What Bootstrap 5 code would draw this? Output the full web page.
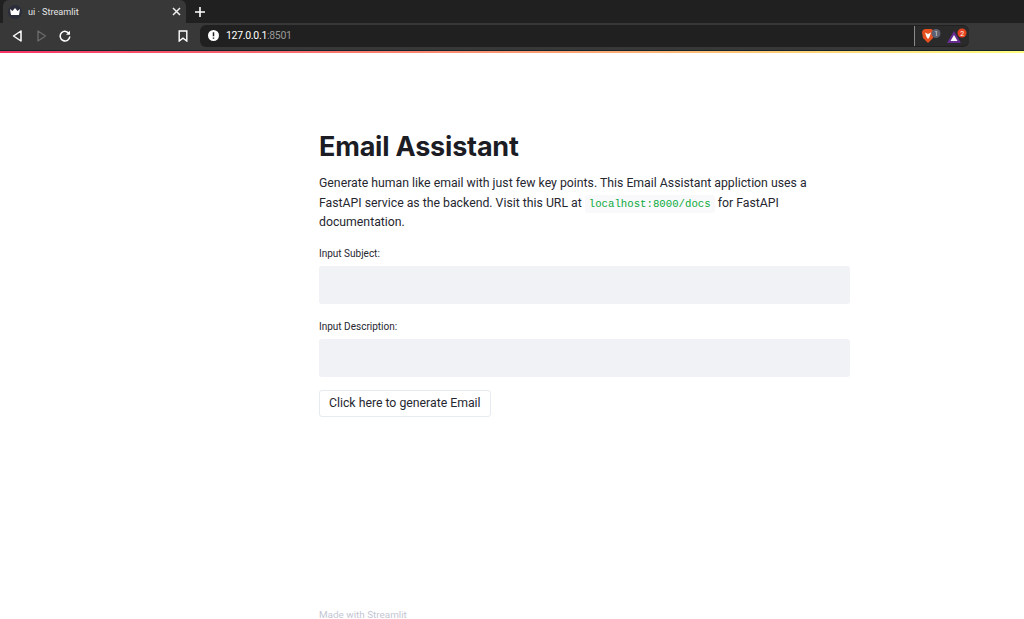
<!DOCTYPE html>
<html lang="en"><head><meta charset="utf-8"><title>ui · Streamlit</title>
<link href="https://cdn.jsdelivr.net/npm/bootstrap@5.3.0/dist/css/bootstrap.min.css" rel="stylesheet">
<style>
html,body{height:100%;overflow:hidden}
body{font-family:"Roboto","Liberation Sans",sans-serif;background:#fff;color:#262730}
.shell{height:619px;width:1024px}
.tabstrip{height:23px;background:#202020}
.apptab{width:183px;height:23px;background:#383838;border-radius:6px 6px 0 0;margin-left:3px;padding:0 5px 0 5px;font:9.1px "Roboto",sans-serif;color:#e6e6e6;gap:6px}
.favicon{width:14px;height:14px;border-radius:50%;background:#2b2d3b}
.plusicon{margin-left:9px}
.toolbar{height:28px;background:#383838;padding:0 0 2px 12px;border-bottom:1px solid #14262a}
.navback{margin-right:15px}
.navfwd{margin-right:12px}
.navmark{margin-left:107px}
.urlbox{width:769px;height:22px;margin-left:12px;background:#202020;border-radius:6px;font:10.5px "Roboto",sans-serif;letter-spacing:-.3px;color:#fff;padding-left:8px}
.urltext{margin-left:7px}
.urlport{color:#9a9a9a}
.extbox{height:20px;width:55px;margin-left:auto;padding-left:6px;background:#2a2a2a;border-radius:0 6px 6px 0;border-left:1px solid #8a8a8a;background-clip:padding-box}
.gradline{height:2px;background:linear-gradient(90deg,#f63366,#fffd80)}
.appmain{width:531px;margin-left:319px;padding-top:75px}
.apptitle{font:700 27px/37px "Inter","Noto Sans",sans-serif;color:#1b1c24;margin:0 0 9px;letter-spacing:-.2px}
.intro{font-size:12.27px;line-height:19.5px;color:#262730;margin:0 0 14.5px}
.intro code{font:10.7px "Liberation Mono","DejaVu Sans Mono",monospace;color:#09ab3b;background:#f9f9fb;padding:3px 4px;border-radius:3px}
.flabel{font-size:10px;line-height:14px;margin-bottom:5px;color:#262730}
.fbox{height:38px;background:#f0f2f6;border:0;border-radius:3px;margin-bottom:16px;width:100%;display:block}
.genbtn{font-size:12.27px;line-height:18px;padding:3px 9px;height:27px;color:#262730;background:#fff;border:1px solid #e6eaf1;border-radius:3px;margin-top:-5px}
.madewith{font-size:9.9px;line-height:12px;font-weight:400;color:#c4c6d3;margin-left:319px;margin-top:auto;margin-bottom:-2px}
</style></head>
<body>
<div class="shell d-flex flex-column">
 <div class="tabstrip d-flex">
  <div class="apptab d-flex align-items-center">
   <span class="favicon d-flex align-items-center justify-content-center"><svg width="10" height="8" viewBox="0 0 10 8"><path d="M0 1l2.500 2L5 0l2.500 3L10 1 9 7H1z" fill="#fff"/></svg></span>
   <span class="flex-grow-1">ui · Streamlit</span>
   <svg width="9" height="9" viewBox="0 0 9 9"><path d="M1 1l7 7M8 1L1 8" stroke="#eee" stroke-width="1.500"/></svg>
  </div>
  <svg class="plusicon align-self-center" width="10" height="10" viewBox="0 0 10 10"><path d="M5 0v10M0 5h10" stroke="#fff" stroke-width="1.600"/></svg>
 </div>
 <div class="toolbar d-flex align-items-center">
  <svg class="navback" width="10" height="12" viewBox="0 0 10 12"><path d="M9 1v10L1.500 6z" fill="none" stroke="#fff" stroke-width="1.500" stroke-linejoin="round"/></svg>
  <svg class="navfwd" width="10" height="12" viewBox="0 0 10 12"><path d="M1 1v10l7.500-5z" fill="none" stroke="#6a6a6a" stroke-width="1.400" stroke-linejoin="round"/></svg>
  <svg width="12" height="12" viewBox="0 0 12 12"><path d="M10.300 4A4.800 4.800 0 1 0 10.800 6.500" fill="none" stroke="#fff" stroke-width="1.500"/><path d="M11 .8v4H7z" fill="#fff"/></svg>
  <svg class="navmark" width="10" height="12" viewBox="0 0 10 12"><path d="M1.200 1h7.600v10L5 8.200 1.200 11z" fill="none" stroke="#fff" stroke-width="1.400"/></svg>
  <div class="urlbox d-flex align-items-center">
   <svg width="11" height="11" viewBox="0 0 11 11"><circle cx="5.500" cy="5.500" r="5.500" fill="#fff"/><path d="M5.500 2.200v4M5.500 7.400v1.400" stroke="#202020" stroke-width="1.500"/></svg>
   <span class="urltext"><span>127.0.0.1</span><span class="urlport">:8501</span></span>
   <div class="extbox d-flex align-items-center gap-1">
    <svg width="22" height="16" viewBox="0 0 22 16"><path d="M2 2l2-1h6l2 1 1 2-1 6-5 5-5-5-1-6z" fill="#e8501f"/><path d="M4 4.500L7 6l3-1.500L8.500 9 7 11 5.500 9z" fill="#fff"/><circle cx="15" cy="5.500" r="4.500" fill="#5d6070"/><text x="15" y="8" font-size="7" fill="#ddd" text-anchor="middle" font-family="Roboto">1</text></svg>
    <svg width="22" height="16" viewBox="0 0 22 16"><path d="M7 3L14 15H0z" fill="#662d91"/><path d="M7 7l3.500 6h-7z" fill="#fff"/><circle cx="15" cy="5" r="4.500" fill="#e8431f"/><text x="15" y="7.500" font-size="7" fill="#fff" text-anchor="middle" font-family="Roboto">2</text></svg>
   </div>
  </div>
 </div>
 <div class="gradline"></div>
 <main class="appmain">
  <h1 class="apptitle">Email Assistant</h1>
  <p class="intro">Generate human like email with just few key points. This Email Assistant appliction uses a FastAPI service as the backend. Visit this URL at <code>localhost:8000/docs</code> for FastAPI documentation.</p>
  <div class="flabel">Input Subject:</div>
  <input class="fbox" type="text" aria-label="Input Subject">
  <div class="flabel">Input Description:</div>
  <input class="fbox" type="text" aria-label="Input Description">
  <button class="btn genbtn" type="button">Click here to generate Email</button>
 </main>
 <div class="madewith">Made with Streamlit</div>
</div>
<script src="https://cdn.jsdelivr.net/npm/bootstrap@5.3.0/dist/js/bootstrap.bundle.min.js"></script>
</body></html>
